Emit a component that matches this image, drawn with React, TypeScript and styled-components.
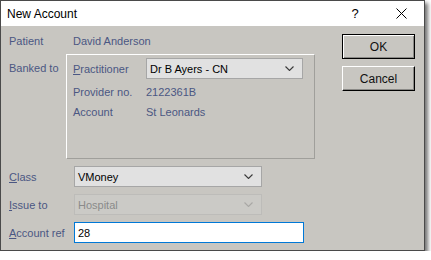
import React from 'react';
import styled, { createGlobalStyle } from 'styled-components';

const GlobalStyle = createGlobalStyle`
  html, body {
    margin: 0;
    padding: 0;
    background: #ffffff;
  }
  body {
    font-family: "Liberation Sans", Arial, sans-serif;
    font-size: 11px;
  }
`;

const Window = styled.div`
  width: 425px;
  height: 251px;
  box-sizing: border-box;
  border: 1px solid #4a4a4a;
  background: #c8c6c1;
  box-shadow: 3px 3px 4px rgba(0, 0, 0, 0.55);
  display: flex;
  flex-direction: column;
`;

const TitleBar = styled.div`
  height: 25px;
  flex: none;
  background: #ffffff;
  display: flex;
  align-items: center;
  padding-left: 6px;
  font-size: 12px;
  color: #000000;
`;

const Title = styled.span`
  flex: 1;
`;

const CaptionButton = styled.div`
  width: 46px;
  height: 25px;
  display: flex;
  align-items: center;
  justify-content: center;
  font-size: 13px;
  color: #000000;
`;

const Body = styled.div`
  flex: 1;
  display: flex;
`;

const FormColumn = styled.div`
  padding: 5px 0 0 8px;
  display: flex;
  flex-direction: column;
`;

const ButtonColumn = styled.div`
  margin-left: auto;
  padding: 8px 9px 0 0;
  display: flex;
  flex-direction: column;
  gap: 7px;
`;

const Row = styled.div<{ $label: number; $height?: number; $top?: number }>`
  display: grid;
  grid-template-columns: ${(p) => p.$label}px auto;
  align-items: center;
  height: ${(p) => p.$height ?? 21}px;
  margin-top: ${(p) => p.$top ?? 0}px;
`;

const GroupRow = styled.div`
  display: grid;
  grid-template-columns: 57px auto;
  align-items: start;
  margin-top: 3px;
`;

const Label = styled.span<{ $pad?: number }>`
  color: #4b5783;
  white-space: nowrap;
  padding-top: ${(p) => p.$pad ?? 0}px;
  u {
    text-decoration: underline;
  }
`;

const Value = styled.span<{ $indent?: number }>`
  color: #4b5783;
  white-space: nowrap;
  padding-left: ${(p) => p.$indent ?? 0}px;
`;

const GroupBox = styled.div`
  width: 249px;
  height: 105px;
  box-sizing: border-box;
  border-top: 1px solid #ffffff;
  border-left: 1px solid #ffffff;
  border-right: 1px solid #a09f9b;
  border-bottom: 1px solid #a09f9b;
  padding: 3px 0 0 6px;
  display: flex;
  flex-direction: column;
`;

const Combo = styled.div<{ $width: number; $disabled?: boolean }>`
  width: ${(p) => p.$width}px;
  height: 21px;
  box-sizing: border-box;
  border: 1px solid ${(p) => (p.$disabled ? '#bdbcb9' : '#a6a6a6')};
  background: ${(p) => (p.$disabled ? '#cbcac6' : '#e1e1e1')};
  color: ${(p) => (p.$disabled ? '#8a8a8a' : '#000000')};
  display: flex;
  align-items: center;
  padding: 0 8px 0 3px;
  white-space: nowrap;
  span {
    flex: 1;
  }
`;

const TextInput = styled.div`
  width: 230px;
  height: 21px;
  box-sizing: border-box;
  border: 1px solid #0078d7;
  background: #ffffff;
  color: #000000;
  display: flex;
  align-items: center;
  padding-left: 3px;
`;

const Button = styled.div<{ $default?: boolean }>`
  width: 73px;
  height: 25px;
  box-sizing: border-box;
  display: flex;
  align-items: center;
  justify-content: center;
  font-size: 12px;
  color: #111111;
  background: #c8c6c1;
  border: 1px solid #000000;
  border-top-color: ${(p) => (p.$default ? '#000000' : '#ffffff')};
  border-left-color: ${(p) => (p.$default ? '#000000' : '#ffffff')};
  box-shadow: ${(p) =>
    p.$default
      ? 'inset 1px 1px #ffffff, inset -1px -1px #8a8986'
      : 'inset -1px -1px #8a8986'};
`;

const Chevron = ({ disabled }: { disabled?: boolean }) => (
  <svg width="9" height="5" viewBox="0 0 9 5">
    <polyline
      points="0.5,0.5 4.5,4.5 8.5,0.5"
      fill="none"
      stroke={disabled ? '#a9a8a5' : '#3a3a3a'}
      strokeWidth="1.1"
    />
  </svg>
);

const CloseIcon = () => (
  <svg width="11" height="11" viewBox="0 0 11 11">
    <path d="M0.5 0.5 L10.5 10.5 M10.5 0.5 L0.5 10.5" stroke="#000" strokeWidth="1" />
  </svg>
);

const App = () => {
  return (
    <>
      <GlobalStyle />
      <Window>
        <TitleBar>
          <Title>New Account</Title>
          <CaptionButton>?</CaptionButton>
          <CaptionButton>
            <CloseIcon />
          </CaptionButton>
        </TitleBar>
        <Body>
          <FormColumn>
            <Row $label={57} $height={20}>
              <Label>Patient</Label>
              <Value $indent={7}>David Anderson</Value>
            </Row>
            <GroupRow>
              <Label $pad={8}>Banked to</Label>
              <GroupBox>
                <Row $label={73}>
                  <Label>
                    <u>P</u>ractitioner
                  </Label>
                  <Combo $width={157}>
                    <span>Dr B Ayers - CN</span>
                    <Chevron />
                  </Combo>
                </Row>
                <Row $label={73} $height={20} $top={3}>
                  <Label>Provider no.</Label>
                  <Value>2122361B</Value>
                </Row>
                <Row $label={73} $height={20}>
                  <Label>Account</Label>
                  <Value>St Leonards</Value>
                </Row>
              </GroupBox>
            </GroupRow>
            <Row $label={65} $top={7}>
              <Label>
                <u>C</u>lass
              </Label>
              <Combo $width={188}>
                <span>VMoney</span>
                <Chevron />
              </Combo>
            </Row>
            <Row $label={65} $top={7}>
              <Label>
                <u>I</u>ssue to
              </Label>
              <Combo $width={188} $disabled>
                <span>Hospital</span>
                <Chevron disabled />
              </Combo>
            </Row>
            <Row $label={65} $top={7}>
              <Label>
                <u>A</u>ccount ref
              </Label>
              <TextInput>28</TextInput>
            </Row>
          </FormColumn>
          <ButtonColumn>
            <Button $default>OK</Button>
            <Button>Cancel</Button>
          </ButtonColumn>
        </Body>
      </Window>
    </>
  );
};

export default App;
